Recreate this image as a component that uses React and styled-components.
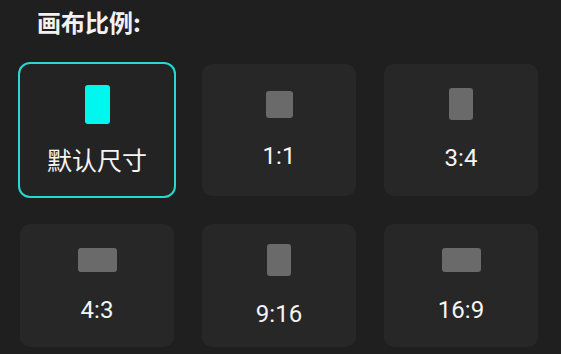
import styled, { createGlobalStyle } from 'styled-components';

const GlobalStyle = createGlobalStyle`
  html, body {
    margin: 0;
    padding: 0;
    background-color: #1f1f1f;
  }
  body {
    font-family: Roboto, "Noto Sans CJK SC", sans-serif;
  }
`;

const ratios = [
  { label: '默认尺寸', w: 25, h: 39, selected: true },
  { label: '1:1', w: 27, h: 27 },
  { label: '3:4', w: 24, h: 32 },
  { label: '4:3', w: 39, h: 24 },
  { label: '9:16', w: 24, h: 32 },
  { label: '16:9', w: 39, h: 24 },
];

export default function App() {
  return (
    <>
      <GlobalStyle />
      <Page>
        <Title>画布比例:</Title>
        <Grid>
          {ratios.map((r) => (
            <Card key={r.label} $selected={r.selected}>
              <Shape $w={r.w} $h={r.h} $selected={r.selected} />
              <Label $cjk={r.selected}>{r.label}</Label>
            </Card>
          ))}
        </Grid>
      </Page>
    </>
  );
}

const Page = styled.div`
  width: 561px;
  height: 354px;
  overflow: hidden;
  box-sizing: border-box;
  padding: 6px 0 0 20px;
  background-color: #1f1f1f;
`;

const Title = styled.h3`
  margin: 0 0 0 17px;
  height: 32px;
  line-height: 32px;
  font-size: 24px;
  font-weight: 700;
  color: #f2f2f2;
  font-family: "Noto Sans CJK SC", sans-serif;
`;

const Grid = styled.div`
  margin-top: 26px;
  display: grid;
  grid-template-columns: repeat(3, 154px);
  grid-template-rows: 132px 123px;
  gap: 28px;
`;

const Card = styled.div`
  background-color: ${(p) => (p.$selected ? '#232323' : '#272727')};
  border-radius: 10px;
  box-shadow: ${(p) => (p.$selected ? '0 0 0 2px #2ad8d2' : 'none')};
  display: flex;
  flex-direction: column;
  align-items: center;
  justify-content: center;
  gap: 24px;
  cursor: pointer;
`;

const Shape = styled.div`
  width: ${(p) => p.$w}px;
  height: ${(p) => p.$h}px;
  border-radius: 3px;
  background-color: ${(p) => (p.$selected ? '#00f7f0' : '#6a6a6a')};
`;

const Label = styled.span`
  font-size: ${(p) => (p.$cjk ? 25 : 24)}px;
  line-height: 28px;
  color: #f5f5f5;
`;
